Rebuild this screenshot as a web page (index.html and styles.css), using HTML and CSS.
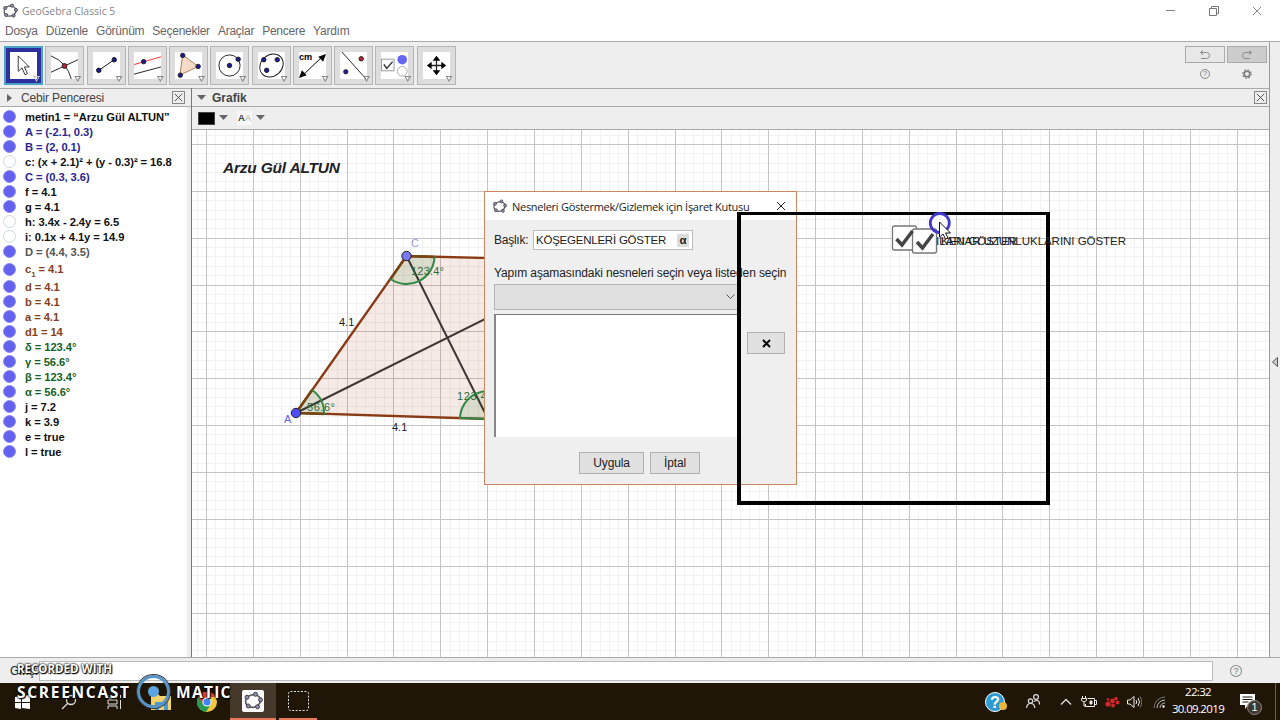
FILE: index.html
```html
<!DOCTYPE html>
<html lang="tr">
<head>
  <meta charset="UTF-8" />
  <title>GeoGebra Classic 5</title>
  <link rel="stylesheet" href="styles.css">
</head>
<body>
  <svg width="0" height="0" class="defs">
    <symbol id="ggb" viewBox="0 0 16 16">
      <ellipse cx="8" cy="8" rx="6" ry="5" fill="none" stroke="#555" stroke-width="1.3" transform="rotate(-15 8 8)"/>
      <g fill="#8e8ebc" stroke="#444" stroke-width=".8">
        <circle cx="10" cy="2.6" r="1.6"/><circle cx="3.2" cy="5" r="1.6"/><circle cx="14" cy="7" r="1.6"/>
        <circle cx="4.2" cy="12" r="1.6"/><circle cx="11.6" cy="12.6" r="1.6"/>
      </g>
    </symbol>
    <symbol id="cross" viewBox="0 0 10 10"><path d="M1 1l8 8M9 1l-8 8" fill="none" stroke="currentColor"/></symbol>
  </svg>

  <header class="titlebar">
    <svg class="logo" width="16" height="16"><use href="#ggb"/></svg>
    <span class="app-name">GeoGebra Classic 5</span>
    <div class="win-buttons">
      <svg width="10" height="10"><path d="M0 4.500h9" stroke="#888"/></svg>
      <svg width="10" height="10" fill="none" stroke="#777"><path d="M.5 2.500h7v7h-7zM2.500 2.500v-2h7v7h-2"/></svg>
      <svg width="10" height="10" color="#888"><use href="#cross"/></svg>
    </div>
  </header>
  <nav class="menu">
    <span>Dosya</span><span>Düzenle</span><span>Görünüm</span><span>Seçenekler</span><span>Araçlar</span><span>Pencere</span><span>Yardım</span>
  </nav>

  <div class="window">
    <div class="main">
      <div class="toolbar">
        <div class="tools">
          <div class="tool active"><svg viewBox="0 0 28 28"><path d="M8.500 4v16l4-3.500 3 7 2.500-1-3-7h5z" fill="#fff" stroke="#333"/></svg></div>
          <div class="tool"><svg viewBox="0 0 28 28" fill="none" stroke="#222"><path d="M0 4q17 7 21 24M0 21L28 8"/><circle cx="14" cy="14.500" r="2.500" fill="#c0202c"/></svg></div>
          <div class="tool"><svg viewBox="0 0 28 28" fill="#1a1a96" stroke="#111"><path d="M6 19L22 8"/><circle cx="6" cy="19" r="2.300"/><circle cx="22" cy="8" r="2.300"/></svg></div>
          <div class="tool"><svg viewBox="0 0 28 28" fill="#1a1a96" stroke="#222"><path d="M0 23L28 15.500"/><path d="M0 13L28 5" stroke="#e33"/><circle cx="10" cy="10" r="2.300"/></svg></div>
          <div class="tool"><svg viewBox="0 0 28 28" fill="#1a1a96" stroke="#222"><path d="M8 3L24 15 5 24z" fill="#f7dac6" stroke="#a67c62"/><circle cx="8" cy="3.500" r="2.300"/><circle cx="24" cy="15" r="2.300"/><circle cx="5.500" cy="24" r="2.300"/></svg></div>
          <div class="tool"><svg viewBox="0 0 28 28" fill="#1a1a96" stroke="#222"><circle cx="14" cy="14" r="11" fill="none"/><circle cx="14" cy="14" r="2.300"/><circle cx="23" cy="7.500" r="2.300"/></svg></div>
          <div class="tool"><svg viewBox="0 0 28 28" fill="#1a1a96" stroke="#222"><ellipse cx="14" cy="14" rx="13" ry="11" fill="none" transform="rotate(-42 14 14)"/><circle cx="6" cy="8" r="2.300"/><circle cx="20" cy="8" r="2.300"/><circle cx="9" cy="19" r="2.300"/></svg></div>
          <div class="tool"><svg viewBox="0 0 28 28"><path d="M4 24L24 5" stroke="#000"/><path d="M0 27l3-8 5 5zM28 2l-8 3 5 5z"/><text x="0" y="8" class="cm">cm</text></svg></div>
          <div class="tool"><svg viewBox="0 0 28 28" fill="#1a1a96" stroke="#222"><path d="M2 0L27 28"/><circle cx="6" cy="20.500" r="2.200"/><circle cx="22" cy="7" r="2.300" fill="#c0202c"/></svg></div>
          <div class="tool"><svg viewBox="0 0 28 28" fill="none"><rect x=".5" y="7.500" width="13" height="12" fill="#fff" stroke="#999"/><path d="M3 13l3 4 6-7" stroke="#333" stroke-width="1.500"/><circle cx="22" cy="8" r="5" fill="#6666f5"/><circle cx="22" cy="20" r="5" fill="#fff" stroke="#aaa"/></svg></div>
          <div class="tool"><svg viewBox="0 0 28 28"><path d="M14 7v14M7 14h14" stroke="#222" stroke-width="1.300"/><path d="M14 4l4 5h-8zM14 24l4-5h-8zM4 14l5-4v8zM24 14l-5-4v8z"/></svg></div>
        </div>
        <div class="side-tools">
          <div class="undo"><svg width="12" height="10" fill="none" stroke="#888"><path d="M4 .5L1.500 2.500 4 5M2 2.500h5.500a3 3 0 0 1 0 6H2"/></svg></div>
          <div class="undo redo"><svg width="12" height="10" fill="none" stroke="#888"><path d="M8 .5l2.500 2L8 5M10 2.500H4.500a3 3 0 0 0 0 6H9"/></svg></div>
          <div class="small-icon"><i class="help">?</i></div>
          <div class="small-icon"><svg width="10" height="10" fill="none" stroke="#777"><circle cx="5" cy="5" r="2.800" stroke-width="1.500"/><circle cx="5" cy="5" r="4.200" stroke-width="1.200" stroke-dasharray="1.600 1.700"/></svg></div>
        </div>
      </div>

      <div class="views">
        <aside class="algebra">
          <div class="panel-head">
            <svg class="tri-right" width="6" height="8"><path d="M0 0l5 4-5 4z" fill="#666"/></svg>
            <span>Cebir Penceresi</span>
            <svg class="close" width="13" height="13" viewBox="-1 -1 12 12"><use href="#cross" width="10" height="10"/></svg>
          </div>
          <ul class="objects">
            <li>metin1 = “Arzu Gül ALTUN”</li>
            <li class="point">A = (-2.1, 0.3)</li>
            <li class="point">B = (2, 0.1)</li>
            <li class="off">c: (x + 2.1)² + (y - 0.3)² = 16.8</li>
            <li class="point">C = (0.3, 3.6)</li>
            <li>f = 4.1</li>
            <li>g = 4.1</li>
            <li class="off">h: 3.4x - 2.4y = 6.5</li>
            <li class="off">i: 0.1x + 4.1y = 14.9</li>
            <li class="dependent">D = (4.4, 3.5)</li>
            <li class="brown tall">c<sub>1</sub>&nbsp;= 4.1</li>
            <li class="brown">d = 4.1</li>
            <li class="brown">b = 4.1</li>
            <li class="brown">a = 4.1</li>
            <li class="brown">d1 = 14</li>
            <li class="green">δ = 123.4°</li>
            <li class="green">γ = 56.6°</li>
            <li class="green">β = 123.4°</li>
            <li class="green">α = 56.6°</li>
            <li>j = 7.2</li>
            <li>k = 3.9</li>
            <li>e = true</li>
            <li>l = true</li>
          </ul>
        </aside>

        <section class="graphics">
          <div class="panel-head">
            <svg width="9" height="6"><path d="M0 0h9L4.500 5z" fill="#666"/></svg>
            <b>Grafik</b>
            <svg class="close" width="13" height="13" viewBox="-1 -1 12 12"><use href="#cross" width="10" height="10"/></svg>
          </div>
          <div class="style-bar">
            <span class="swatch"></span>
            <svg width="9" height="6"><path d="M0 0h9L4.500 5z" fill="#666"/></svg>
            <span class="aa">A<em>A</em></span>
            <svg width="9" height="6"><path d="M0 0h9L4.500 5z" fill="#666"/></svg>
          </div>
          <svg class="canvas" width="1077" height="527" viewBox="192 130 1077 527">
            <g id="grid" shape-rendering="crispEdges"></g>
            <path d="M296 413L406.500 256 600 261 488 419z" fill="#993300" fill-opacity=".1" stroke="#8a3a14" stroke-width="2.300"/>
            <path d="M296 413L600 262M406.500 256L488 419" stroke="#403636" stroke-width="2"/>
            <g fill="#006400" fill-opacity=".1" stroke="#2f8a45" stroke-width="2">
              <path d="M406.500 256L434.500 257A28 28 0 0 1 390.500 279z"/>
              <path d="M296 413L312 390A28 28 0 0 1 324 414z"/>
              <path d="M488 419L460 418A28 28 0 0 1 504 396z"/>
            </g>
            <path d="M312 390L296 413 324 414M434.500 257L406.500 256 390.500 279" fill="none" stroke="#7a4310" stroke-width="2.300"/>
            <circle cx="406.500" cy="256" r="4.700" fill="#7878f5" stroke="#222"/>
            <circle cx="296" cy="413" r="4.700" fill="#4d4dff" stroke="#222"/>
            <g class="labels">
              <text x="223" y="173" class="author" textLength="117">Arzu Gül ALTUN</text>
              <text x="411" y="247" fill="#9a9ad8">C</text>
              <text x="284" y="423" fill="#6666d8">A</text>
              <text x="339" y="326">4.1</text>
              <text x="392" y="431">4.1</text>
              <text x="411" y="275" fill="#2c6b3a" textLength="33">123.4°</text>
              <text x="307" y="411" fill="#2c6b3a" textLength="28">56.6°</text>
              <text x="457" y="400" fill="#2c6b3a" textLength="35">123.4°</text>
            </g>
          </svg>
        </section>
      </div>
    </div>
    <div class="right-strip"><svg width="6" height="10"><path d="M5.500 .5v9L.5 5z" fill="#ccc" stroke="#555"/></svg></div>
  </div>

  <div class="input-bar">
    <label>Giriş:</label>
    <div class="field"></div>
    <i class="help">?</i>
  </div>

  <footer class="taskbar">
    <div class="task"><svg width="16" height="14" fill="#fff"><path d="M0 2l6-1v6H0zM7 1l8-1v7H7zM0 8h6v6l-6-1zM7 8h8v6l-8-1z"/></svg></div>
    <div class="task"><svg width="16" height="16" fill="none" stroke="#ddd" stroke-width="1.300"><circle cx="10" cy="6" r="4.500"/><path d="M7 9l-6 6"/></svg></div>
    <div class="task"><svg width="16" height="14" fill="none" stroke="#ddd"><path d="M1 0v3h9V0M1 14v-3h9v3M1 5h9v4H1zM13.500 0v3M13.500 5v9"/></svg></div>
    <div class="task"><svg width="20" height="17"><path d="M0 1h7l2 2h11v14H0z" fill="#f5d36c"/><path d="M4 9h13v8h-4v-4H8v4H4z" fill="#4b9bd0"/></svg></div>
    <div class="task"><svg width="20" height="20" viewBox="0 0 20 20"><circle cx="10" cy="10" r="10" fill="#f3c93b"/><path d="M10 10L1.300 5A10 10 0 0 0 9 20l5-8z" fill="#269b55"/><path d="M10 5h8.700a10 10 0 0 0-17.400 0L6 12z" fill="#dc4437"/><circle cx="10" cy="10" r="4.600" fill="#fff"/><circle cx="10" cy="10" r="3.600" fill="#4285f4"/></svg></div>
    <div class="task current"><span class="tile"><svg width="20" height="20"><use href="#ggb"/></svg></span></div>
    <div class="task running"><svg width="21" height="20" fill="none"><rect x=".5" y=".5" width="20" height="19" rx="2" stroke="#ddd" stroke-dasharray="2 1.500"/></svg></div>
    <div class="tray">
      <svg class="t-help" width="22" height="20"><circle cx="10" cy="10" r="9.500" fill="#2d9bd3" stroke="#fff"/><text x="5" y="15.500">?</text><circle cx="18" cy="14" r="4" fill="#e8b53c"/></svg>
      <svg class="t-people" width="14" height="15" fill="none" stroke="#ddd" stroke-width="1.200"><circle cx="4.500" cy="7" r="2.200"/><path d="M.7 14q0-4.500 4-4.500t4 4.500"/><circle cx="10" cy="3" r="2.400"/><path d="M8 7.500q5.500-3 5.500 3"/></svg>
      <svg class="t-up" width="12" height="7" fill="none" stroke="#ddd" stroke-width="1.400"><path d="M1 6.500l5-5 5 5"/></svg>
      <svg class="t-bat" width="16" height="12" fill="none" stroke="#eee"><path d="M6.500 2.500h7v8h-9V8M14 4.500h1.500v4H14M1.500 0v2M4.500 0v2M.5 2.500h5v2q-2.500 3-5 0zM3 6v4h2"/><path d="M9 5h2v3H9z" fill="#eee"/></svg>
      <svg class="t-red" width="15" height="12" fill="#d3272c"><circle cx="3" cy="8" r="2.600"/><circle cx="7.500" cy="5" r="2.400"/><circle cx="11" cy="2.500" r="1.700"/><circle cx="8" cy="9.500" r="2"/><circle cx="12.500" cy="6.500" r="1.900"/><circle cx="3" cy="3.500" r="1.300"/></svg>
      <svg class="t-vol" width="15" height="12" fill="none" stroke="#eee"><path d="M.5 4v4H3l4 3.500V.5L3 4zM9 4q1.500 2 0 4M11 2q3 4 0 8"/><path d="M13 .5q3.500 5.500 0 11" stroke="#777"/></svg>
      <svg class="t-wifi" width="12" height="12" fill="none" stroke="#bbb"><path d="M1 12A11 11 0 0 1 12 1" stroke="#777"/><path d="M4 12a8 8 0 0 1 8-8M7 12a5 5 0 0 1 5-5"/><circle cx="10.500" cy="10.500" r="1" fill="#fff"/></svg>
      <div class="clock"><span>22:32</span><span>30.09.2019</span></div>
      <div class="notice"><svg width="16" height="16"><path d="M0 0h15v11H8l-3 4v-4H0z" fill="#fff"/><path d="M2.500 3h10M2.500 5.500h10M2.500 8h6" stroke="#221a0a"/></svg><span class="count">1</span></div>
      <span class="desktop-edge"></span>
    </div>
  </footer>

  <div class="dialog">
    <div class="dialog-title">
      <svg width="15" height="15"><use href="#ggb"/></svg>
      <span class="dialog-name">Nesneleri Göstermek/Gizlemek için İşaret Kutusu</span>
      <svg class="dialog-close" width="10" height="10"><use href="#cross"/></svg>
    </div>
    <div class="caption-row">
      <span class="caption-label">Başlık:</span>
      <div class="caption-field"><span>KÖŞEGENLERİ GÖSTER</span><b>α</b></div>
    </div>
    <p class="hint">Yapım aşamasındaki nesneleri seçin veya listeden seçin</p>
    <div class="pick-row">
      <div class="pick">
        <div class="combo"><svg width="9" height="6" fill="none" stroke="#555"><path d="M.5 .5l4 4 4-4"/></svg></div>
        <div class="list"></div>
      </div>
      <div class="btn remove"><svg width="9" height="9"><path d="M1 1l7 7M8 1L1 8" stroke="#000" stroke-width="2"/></svg></div>
    </div>
    <div class="dialog-actions"><span class="btn apply">Uygula</span><span class="btn cancel">İptal</span></div>
  </div>

  <!-- selection frame, check boxes and pointer lie over the dialog -->
  <div class="frame"></div>
  <svg class="overlay" width="250" height="50" viewBox="885 210 250 50">
    <g class="check-text">
      <text x="920" y="245" textLength="97">AÇILARI GÖSTER</text>
      <text x="941" y="245" textLength="185">KENAR UZUNLUKLARINI GÖSTER</text>
    </g>
    <g fill="#fff" stroke="#777" stroke-width="1.300">
      <rect x="892.500" y="226" width="24" height="24" rx="2"/>
      <rect x="912.500" y="229" width="24" height="24" rx="2"/>
    </g>
    <path d="M896.500 239l5.500 6 10.500-14M917 242l5.500 6 10.500-14" fill="none" stroke="#444" stroke-width="3.500"/>
    <circle cx="939.800" cy="223" r="9.500" fill="none" stroke="#4338cc" stroke-width="2.800"/>
    <path d="M939.500 222v15l3.500-3 2.500 5 2.500-1-2.500-5h5z" fill="#fff" stroke="#111"/>
  </svg>

  <div class="watermark">
    <div class="wm-top">RECORDED WITH</div>
    <div class="wm-bottom"><span>SCREENCAST</span><i class="ring"></i><span class="wm-matic">MATIC</span></div>
  </div>

  <script>
    // one grid unit is 46.85px wide, split into five
    const unit = 46.85;
    const grid = document.getElementById("grid");

    function line(x1, y1, x2, y2, color) {
      const el = document.createElementNS("http://www.w3.org/2000/svg", "path");
      el.setAttribute("d", `M${x1} ${y1}L${x2} ${y2}`);
      el.setAttribute("stroke", color);
      grid.appendChild(el);
    }

    function drawGrid(step, color) {
      for (let x = 206.5 - unit; x < 1270; x += step) {
        const px = Math.floor(x) + 0.5;
        line(px, 129, px, 657, color);
      }
      for (let y = 144.5 - unit; y < 658; y += step) {
        const py = Math.floor(y) + 0.5;
        line(192, py, 1270, py, color);
      }
    }

    drawGrid(unit / 5, "#f2f2f2");
    drawGrid(unit, "#c4c4c4");
  </script>
</body>
</html>
```
FILE: styles.css
```css
* {
  margin: 0;
  padding: 0;
  box-sizing: border-box;
}

body {
  width: 1280px;
  height: 720px;
  overflow: hidden;
  position: relative;
  display: flex;
  flex-direction: column;
  background: #fff;
  color: #222;
  font-family: "Liberation Sans", Arial, sans-serif;
  font-size: 12px;
}

svg {
  display: block;
  flex: none;
}

.defs {
  position: absolute;
}

.titlebar {
  display: flex;
  align-items: center;
  height: 21px;
  padding: 0 18px 0 2px;
}

.logo {
  margin-right: 4px;
}

.app-name {
  font-family: "Open Sans", sans-serif;
  font-size: 10.500px;
  letter-spacing: -0.05px;
  color: #888;
}

.win-buttons {
  display: flex;
  gap: 33px;
  margin-left: auto;
}

.menu {
  display: flex;
  gap: 8px;
  height: 20px;
  padding: 3px 0 0 5px;
  line-height: 14px;
  letter-spacing: -0.250px;
  color: #666;
}

.window {
  display: flex;
  height: 616px;
  border-top: 1px solid #aaa;
  background: #eee;
}

.main {
  width: 1270px;
  border-right: 1px solid #999;
}

.right-strip {
  display: flex;
  align-items: center;
  flex: 1;
  padding: 25px 0 0 2px;
}

.toolbar {
  display: flex;
  height: 46px;
  padding: 4px 2px 0 4px;
}

.tools {
  display: flex;
  gap: 2.250px;
}

.tool {
  position: relative;
  width: 39px;
  height: 39px;
  padding: 5px;
  border: 1px solid #b5b5b5;
  background: #ddd;
}

.tool svg {
  width: 27px;
  height: 27px;
  background: #fff;
}

.tool::after {
  content: "";
  position: absolute;
  right: 2px;
  bottom: 2px;
  width: 7px;
  height: 6px;
  background: #888;
  clip-path: polygon(0 0, 100% 0, 50% 100%, 0 0, 25% 17%, 50% 70%, 75% 17%, 25% 17%);
}

.tool.active {
  padding: 4px;
  border: 2px solid #4aa3c4;
  background: #2c2f9c;
}

.tool.active::after {
  right: 1px;
  bottom: 1px;
  background: #ccc;
}

.cm {
  font-size: 9.500px;
  font-weight: bold;
}

.side-tools {
  display: grid;
  grid-template-columns: 40px 40px;
  grid-template-rows: 17px 21px;
  gap: 0 2px;
  margin-left: auto;
}

.undo,
.small-icon {
  display: flex;
  align-items: center;
  justify-content: center;
}

.undo {
  border: 1px solid #aaa;
  background: #e8e8e8;
}

.redo {
  background: #ccc;
}

.help {
  width: 10px;
  height: 10px;
  border: 1px solid #888;
  border-radius: 50%;
  color: #777;
  font: 8px/8px "Liberation Sans", sans-serif;
  text-align: center;
}

.views {
  display: flex;
  height: 569px;
}

.algebra {
  width: 192px;
  border-right: 1px solid #777;
  background: #fff;
  box-shadow: inset -4px 0 #eee;
}

.graphics {
  flex: 1;
  min-width: 0;
}

.panel-head {
  display: flex;
  align-items: center;
  height: 19px;
  border-top: 1px solid #aaa;
  border-bottom: 1px solid #aaa;
  background: #eee;
  color: #444;
}

.algebra .panel-head {
  padding: 0 6px 0 7px;
  letter-spacing: -0.150px;
}

.algebra .panel-head span {
  margin-left: 8px;
}

.graphics .panel-head {
  gap: 6px;
  padding: 0 2px 0 5px;
}

.close {
  margin-left: auto;
  border: 1px solid #888;
  color: #444;
}

.objects {
  list-style: none;
  padding-top: 2px;
  color: #111;
  font-size: 11.200px;
  font-weight: bold;
  letter-spacing: -0.070px;
}

.objects li {
  display: flex;
  align-items: center;
  height: 15px;
  padding-left: 4px;
  white-space: pre;
}

.objects li::before {
  content: "";
  width: 11px;
  height: 11px;
  margin-right: 9px;
  border: 1px solid #8a8af2;
  border-radius: 50%;
  background: #6262ee;
}

.objects .off::before {
  border-color: #ccd8e0;
  background: #fff;
}

.objects .tall {
  height: 20px;
}

.objects sub {
  align-self: flex-end;
  font-size: 8px;
}

.objects li {
  margin-left: -1px;
}

.objects .point {
  color: #29268f;
}

.objects .dependent {
  color: #555;
}

.objects .brown {
  color: #84421c;
}

.objects .green {
  color: #16621f;
}

.style-bar {
  display: flex;
  align-items: center;
  height: 23px;
  padding-left: 6px;
  border-bottom: 1px solid #aaa;
}

.swatch {
  width: 17px;
  height: 13px;
  margin-right: 4px;
  border: 1px solid #444;
  background: #000;
}

.aa {
  width: 15px;
  margin: 0 4px 0 9px;
  background: #f8f8f8;
  color: #444;
  font-size: 9.500px;
  font-weight: bold;
  line-height: 14px;
  text-align: center;
}

.aa em {
  color: #aaa;
  font-style: normal;
  font-weight: normal;
}

.canvas {
  background: #fff;
}

.labels {
  font-size: 11px;
  fill: #222;
}

.author {
  font-size: 15.500px;
  font-weight: bold;
  font-style: italic;
}

.input-bar {
  display: flex;
  align-items: center;
  height: 26px;
  padding: 0 38px 0 10px;
  border-top: 1px solid #aaa;
  background: #eee;
}

.input-bar label {
  width: 29px;
}

.field {
  width: 1175px;
  height: 20px;
  border: 1px solid #bbb;
  background: #fff;
}

.input-bar .help {
  width: 12px;
  height: 12px;
  margin-left: 17px;
  font-size: 9px;
  line-height: 10px;
}

.taskbar {
  display: flex;
  height: 37px;
  background: #201608;
  color: #fff;
}

.task {
  display: flex;
  align-items: center;
  justify-content: center;
  width: 46px;
}

.task.current {
  border-bottom: 2px solid #e9795a;
  background: #45392c;
}

.task.running {
  width: 38px;
  margin-left: 3px;
  border-bottom: 2px solid #e9795a;
}

.tile {
  padding: 1px;
  border-radius: 2px;
  background: #fff;
}

.tray {
  display: flex;
  align-items: center;
  flex: 1;
}

.t-help {
  margin-left: 668px;
  fill: #fff;
  font-size: 16px;
  font-weight: bold;
}

.t-people {
  margin-left: 19px;
}

.t-up {
  margin-left: 20px;
}

.t-bat {
  margin-left: 9px;
}

.t-red {
  margin-left: 8px;
}

.t-vol {
  margin-left: 7px;
}

.t-wifi {
  margin-left: 11px;
}

.clock {
  display: flex;
  flex-direction: column;
  align-items: center;
  width: 52px;
  margin: -3px 0 0 7px;
  font: 11.500px/17px "Open Sans", sans-serif;
  letter-spacing: -0.650px;
}

.notice {
  position: relative;
  margin-left: 16px;
}

.count {
  position: absolute;
  left: 7px;
  top: 6px;
  width: 15px;
  height: 15px;
  border: 1px solid #888;
  border-radius: 50%;
  background: #40382e;
  font-size: 11px;
  line-height: 13px;
  text-align: center;
}

.desktop-edge {
  width: 1px;
  height: 37px;
  margin: 0 4px 0 auto;
  background: #665e54;
}

.dialog {
  position: absolute;
  left: 484px;
  top: 191px;
  width: 313px;
  height: 294px;
  border: 1px solid #cf8560;
  background: #efefef;
}

.dialog-title {
  display: flex;
  align-items: center;
  height: 28px;
  padding: 0 10px 0 7px;
  background: #fff;
}

.dialog-name {
  margin-left: 5px;
  font: 11px "Open Sans", sans-serif;
  letter-spacing: -0.280px;
  white-space: nowrap;
}

.dialog-close {
  margin-left: auto;
}

.caption-row {
  display: flex;
  align-items: center;
  height: 20px;
  margin: 10px 0 0 9px;
}

.caption-label {
  width: 39px;
  letter-spacing: -0.250px;
}

.caption-field {
  display: flex;
  align-items: center;
  justify-content: space-between;
  width: 160px;
  height: 20px;
  padding: 0 3px 0 2px;
  border: 1px solid #bbb;
  background: #fff;
  font-size: 11.500px;
  letter-spacing: -0.230px;
}

.caption-field b {
  width: 12px;
  background: #ddd;
  line-height: 13px;
  text-align: center;
}

.hint {
  height: 14px;
  margin: 16px 0 0 9px;
  line-height: 14px;
  letter-spacing: -0.130px;
  white-space: nowrap;
}

.pick-row {
  display: flex;
  gap: 7px;
  margin: 4px 0 0 9px;
}

.combo {
  display: flex;
  align-items: center;
  justify-content: flex-end;
  width: 246px;
  height: 26px;
  padding-right: 4px;
  border: 1px solid #b5b5b5;
  background: #e0e0e0;
}

.list {
  width: 243px;
  height: 123px;
  margin-top: 4px;
  border-top: 1px solid #777;
  border-left: 2px solid #888;
  background: #fff;
}

.btn {
  display: flex;
  align-items: center;
  justify-content: center;
  height: 22px;
  border: 1px solid #b0b0b0;
  background: #e1e1e1;
  letter-spacing: -0.150px;
}

.remove {
  width: 38px;
  margin-top: 48px;
}

.dialog-actions {
  display: flex;
  gap: 6px;
  margin: 15px 0 0 94px;
}

.apply {
  width: 65px;
}

.cancel {
  width: 50px;
}

.frame {
  position: absolute;
  left: 737px;
  top: 212px;
  width: 313px;
  height: 293px;
  border: 4px solid #000;
  border-top-width: 3px;
}

.overlay {
  position: absolute;
  left: 885px;
  top: 210px;
}

.check-text {
  font-size: 11.500px;
  fill: #222;
}

.watermark {
  position: absolute;
  left: 17px;
  top: 662px;
  color: #fff;
  font-family: "Open Sans", sans-serif;
  font-weight: bold;
  text-shadow: 0 0 2px #000, 1px 1px 1px #000, 0 0 2px #000;
}

.wm-top {
  font-size: 11.500px;
  line-height: 14px;
}

.wm-bottom {
  display: flex;
  align-items: center;
  height: 32px;
  font-size: 15.500px;
  letter-spacing: 1.700px;
}

.wm-bottom span {
  width: 120px;
  margin-top: -1px;
}

.ring {
  display: flex;
  align-items: center;
  justify-content: center;
  width: 33px;
  height: 33px;
  margin-top: -2px;
  border: 3px solid #5794c6;
  border-radius: 50%;
  box-shadow: 0 0 0 1px #333;
}

.ring::before {
  content: "";
  width: 11px;
  height: 11px;
  border-radius: 50%;
  background: #5ba4df;
}

.wm-bottom .wm-matic {
  width: 60px;
  margin-left: 6px;
  letter-spacing: 1.300px;
}
```
